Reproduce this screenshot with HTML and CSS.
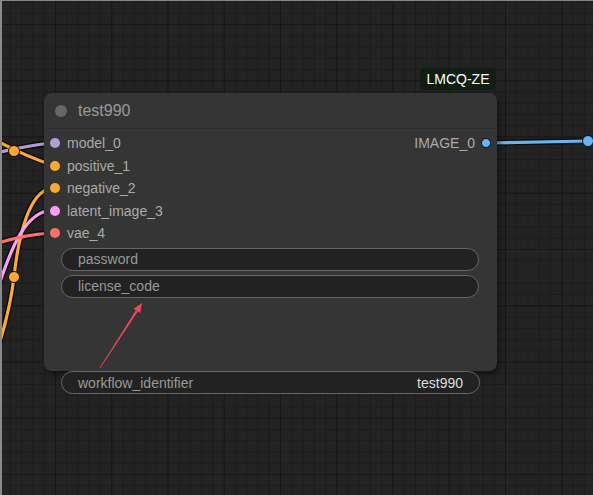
FILE: index.html
```html
<!DOCTYPE html>
<html lang="en">
<head>
  <meta charset="UTF-8">
  <title>test990</title>
  <link rel="stylesheet" href="styles.css">
</head>
<body>
  <div class="canvas">
    <!-- links behind the node -->
    <svg class="links" width="593" height="495" viewBox="0 0 593 495">
      <g class="link-shadow">
        <path d="M0 152 C 15 149, 30 145, 52 143" />
        <path d="M-8 138 Q 20 154 52 165" />
        <path d="M52 188 C 28 191, 18 240, 14 277 C 11 302, 5 326, -2 348" />
        <path d="M52 210 C 26 212, 12 245, -2 288" />
        <path d="M52 233 C 30 234, 15 238, -2 243" />
        <path d="M486 143 L 588 141" />
      </g>
      <path class="link" stroke="#b39ddb" d="M0 152 C 15 149, 30 145, 52 143" />
      <path class="link" stroke="#ffa931" d="M-8 138 Q 20 154 52 165" />
      <path class="link" stroke="#ffa931" d="M52 188 C 28 191, 18 240, 14 277 C 11 302, 5 326, -2 348" />
      <path class="link" stroke="#ff9cf9" d="M52 210 C 26 212, 12 245, -2 288" />
      <path class="link" stroke="#ff6e6e" d="M52 233 C 30 234, 15 238, -2 243" />
      <path class="link" stroke="#64b5f6" d="M486 143 L 588 141" />
      <circle cx="14" cy="151" r="5.5" fill="#ffa931" stroke="#111" stroke-width="1" />
      <circle cx="14" cy="277" r="5.5" fill="#ffa931" stroke="#111" stroke-width="1" />
      <circle cx="588" cy="141" r="5.5" fill="#64b5f6" stroke="#111" stroke-width="1" />
    </svg>

    <div class="badge">LMCQ-ZE</div>

    <div class="node">
      <div class="node-title">
        <span class="title-dot"></span>
        <span class="title-text">test990</span>
      </div>
      <div class="slots">
        <div class="inputs">
          <div class="slot"><span class="dot" style="background:#b39ddb"></span>model_0</div>
          <div class="slot"><span class="dot" style="background:#ffa931"></span>positive_1</div>
          <div class="slot"><span class="dot" style="background:#ffa931"></span>negative_2</div>
          <div class="slot"><span class="dot" style="background:#ff9cf9"></span>latent_image_3</div>
          <div class="slot"><span class="dot" style="background:#ff6e6e"></span>vae_4</div>
        </div>
        <div class="outputs">
          <div class="slot out">IMAGE_0<span class="dot out-dot" style="background:#64b5f6"></span></div>
        </div>
      </div>
      <div class="widgets">
        <div class="widget"><span class="w-name">password</span></div>
        <div class="widget"><span class="w-name">license_code</span></div>
      </div>
    </div>

    <div class="widget floating">
      <span class="w-name">workflow_identifier</span>
      <span class="w-value">test990</span>
    </div>

    <!-- annotation arrow -->
    <svg class="marks" width="593" height="495" viewBox="0 0 593 495">
      <polygon fill="#f0475b" points="99.6,368 100.4,368 137.9,311.2 136.1,310.0" />
      <polygon fill="#f0475b" points="142,303 140.2,313 133.6,308.7" />
    </svg>
  </div>
</body>
</html>
```

FILE: styles.css
```css
* {
  box-sizing: border-box;
}

body {
  margin: 0;
  font-family: "Liberation Sans", Arial, sans-serif;
  background-color: #222;
}

.canvas {
  position: relative;
  width: 593px;
  height: 495px;
  overflow: hidden;
  border-top: 1px solid #858585;
  border-left: 2px solid #8a8a8a;
  background-color: #232323;
  background-image:
    linear-gradient(to right, #171717 1px, transparent 1px),
    linear-gradient(to bottom, #171717 1px, transparent 1px),
    linear-gradient(to right, #1c1c1c 1px, transparent 1px),
    linear-gradient(to bottom, #1c1c1c 1px, transparent 1px);
  background-size: 56.25px 56.25px, 56.25px 56.25px, 11.25px 11.25px, 11.25px 11.25px;
  background-position: 53px 0, 0 23px, 8px 0, 0 0.5px;
}

.links, .marks {
  position: absolute;
  left: -2px;
  top: -1px;
}

.marks {
  z-index: 5;
}

.link-shadow path {
  fill: none;
  stroke: #0c0c0c;
  stroke-width: 6;
}

.link {
  fill: none;
  stroke-width: 3.2;
}

/* node */
.badge {
  position: absolute;
  left: 418px;
  top: 67px;
  width: 76px;
  height: 22px;
  border-radius: 5px;
  background-color: #0f1e10;
  color: #fff;
  font-size: 14px;
  line-height: 22px;
  text-align: center;
}

.node {
  position: absolute;
  left: 42px;
  top: 92px;
  width: 453px;
  height: 278px;
  background-color: #353535;
  border-radius: 8px;
  box-shadow: 2px 3px 6px rgba(0, 0, 0, 0.5);
}

.node-title {
  display: flex;
  align-items: center;
  height: 36px;
  padding-left: 11px;
  border-bottom: 1px solid #2d2d2d;
}

.title-dot {
  width: 12px;
  height: 12px;
  border-radius: 50%;
  background-color: #666;
}

.title-text {
  margin-left: 11px;
  color: #999;
  font-size: 16px;
}

.slots {
  display: flex;
  justify-content: space-between;
  padding-top: 3px;
}

.slot {
  display: flex;
  align-items: center;
  height: 22.5px;
  color: #aaa;
  font-size: 14px;
}

.inputs .slot {
  padding-left: 6px;
}

.inputs .dot {
  margin-right: 7px;
}

.dot {
  width: 10px;
  height: 10px;
  border-radius: 50%;
}

.outputs .slot {
  padding-right: 6px;
}

.out-dot {
  margin-left: 6px;
  border: 1px solid #111;
}

/* widgets */
.widgets {
  display: flex;
  flex-direction: column;
  gap: 4px;
  padding: 3px 18px 0 17px;
}

.widget {
  display: flex;
  justify-content: space-between;
  align-items: center;
  height: 23px;
  padding: 0 16px 0 16px;
  border: 1px solid #666;
  border-radius: 12px;
  background-color: #222;
  font-size: 14px;
}

.w-name {
  color: #999;
}

.w-value {
  color: #ddd;
}

.floating {
  position: absolute;
  left: 59px;
  top: 370px;
  width: 419px;
  z-index: 4;
}
```
